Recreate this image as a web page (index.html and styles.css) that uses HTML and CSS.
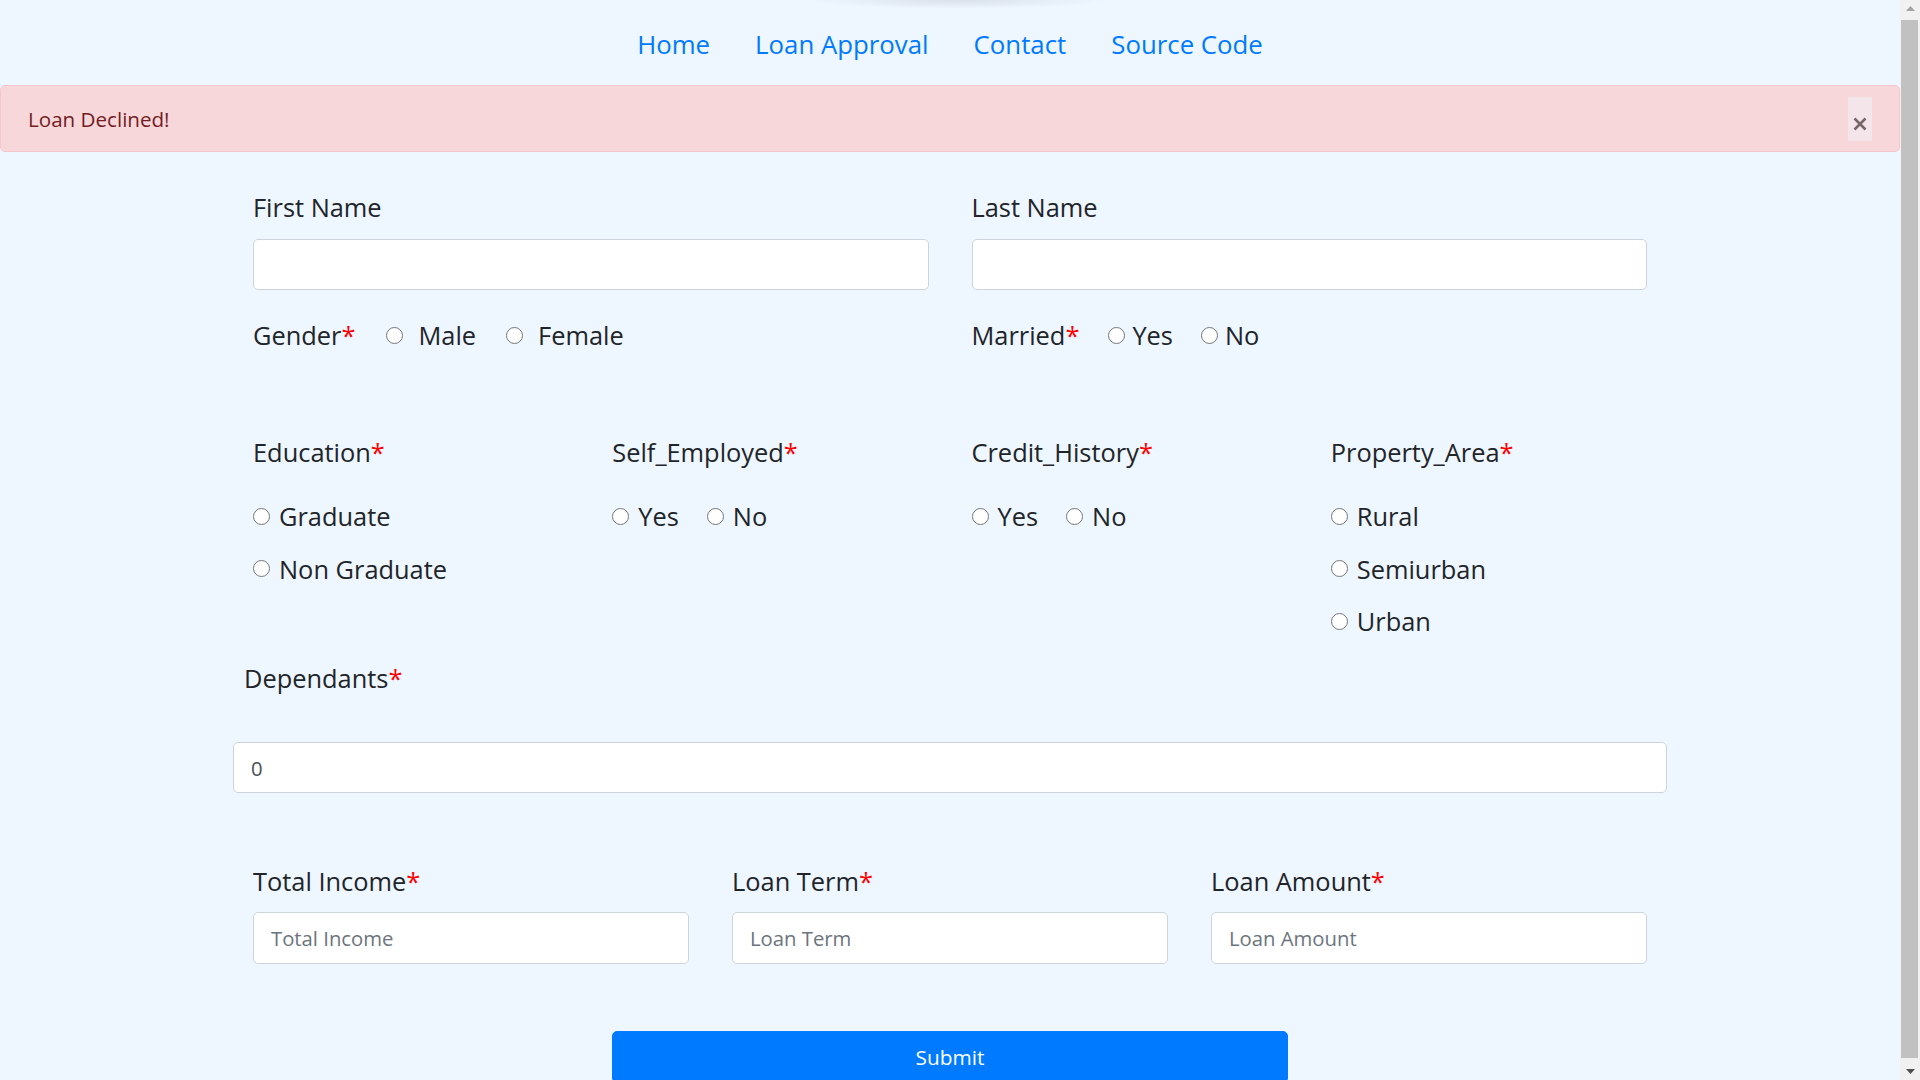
FILE: index.html
```html
<!DOCTYPE html>
<html lang="en">
<head>
<meta charset="utf-8">
<title>Loan Approval</title>
<link rel="stylesheet" href="styles.css">
</head>
<body>
<div class="page">
  <div class="viewport">
    <nav class="topnav">
      <ul>
        <li><a href="#">Home</a></li>
        <li><a href="#">Loan Approval</a></li>
        <li><a href="#">Contact</a></li>
        <li><a href="#">Source Code</a></li>
      </ul>
    </nav>

    <div class="alert">
      Loan Declined!
      <button class="close" type="button" aria-label="Close">
        <svg class="close-icon" width="14" height="14" viewBox="0 0 14 14"><path d="M1.5 1.5 L12.5 12.5 M12.5 1.5 L1.5 12.5" stroke="#76666a" stroke-width="2.6" fill="none"/></svg>
      </button>
    </div>

    <main class="container">
      <form class="loan-form">
        <div class="grid-2 names">
          <div class="field">
            <label class="field-label">First Name</label>
            <input class="input" type="text">
          </div>
          <div class="field">
            <label class="field-label">Last Name</label>
            <input class="input" type="text">
          </div>
        </div>

        <div class="grid-2 inline-row">
          <div class="radio-line">
            <span class="field-label">Gender<span class="req">*</span></span>
            <label class="opt wide first"><input type="radio" name="gender"><span>Male</span></label>
            <label class="opt wide"><input type="radio" name="gender"><span>Female</span></label>
          </div>
          <div class="radio-line married">
            <span class="field-label">Married<span class="req">*</span></span>
            <label class="opt first"><input type="radio" name="married"><span>Yes</span></label>
            <label class="opt"><input type="radio" name="married"><span>No</span></label>
          </div>
        </div>

        <div class="grid-4 groups">
          <div class="group">
            <span class="field-label">Education<span class="req">*</span></span>
            <div class="opt-row"><label class="opt"><input type="radio" name="edu"><span>Graduate</span></label></div>
            <div class="opt-row"><label class="opt"><input type="radio" name="edu"><span>Non Graduate</span></label></div>
          </div>
          <div class="group">
            <span class="field-label">Self_Employed<span class="req">*</span></span>
            <div class="opt-row">
              <label class="opt"><input type="radio" name="self"><span>Yes</span></label>
              <label class="opt next"><input type="radio" name="self"><span>No</span></label>
            </div>
          </div>
          <div class="group">
            <span class="field-label">Credit_History<span class="req">*</span></span>
            <div class="opt-row">
              <label class="opt"><input type="radio" name="credit"><span>Yes</span></label>
              <label class="opt next"><input type="radio" name="credit"><span>No</span></label>
            </div>
          </div>
          <div class="group">
            <span class="field-label">Property_Area<span class="req">*</span></span>
            <div class="opt-row"><label class="opt"><input type="radio" name="area"><span>Rural</span></label></div>
            <div class="opt-row"><label class="opt"><input type="radio" name="area"><span>Semiurban</span></label></div>
            <div class="opt-row"><label class="opt"><input type="radio" name="area"><span>Urban</span></label></div>
          </div>
        </div>

        <div class="dependants">
          <label class="field-label dep-label">Dependants<span class="req">*</span></label>
          <input class="input dep-input" type="text" value="0">
        </div>

        <div class="grid-3 amounts">
          <div class="field">
            <label class="field-label">Total Income<span class="req">*</span></label>
            <input class="input small-gap" type="text" placeholder="Total Income">
          </div>
          <div class="field">
            <label class="field-label">Loan Term<span class="req">*</span></label>
            <input class="input small-gap" type="text" placeholder="Loan Term">
          </div>
          <div class="field">
            <label class="field-label">Loan Amount<span class="req">*</span></label>
            <input class="input small-gap" type="text" placeholder="Loan Amount">
          </div>
        </div>

        <div class="submit-wrap">
          <button class="submit" type="button">Submit</button>
        </div>
      </form>
    </main>
  </div>

  <aside class="scrollbar" aria-hidden="true">
    <div class="sb-btn"><svg width="9" height="5" viewBox="0 0 9 5"><path d="M0 5 L4.5 0 L9 5 Z" fill="#a3a3a3"/></svg></div>
    <div class="sb-thumb"></div>
    <div class="sb-btn"><svg width="9" height="5" viewBox="0 0 9 5"><path d="M0 0 L9 0 L4.5 5 Z" fill="#505050"/></svg></div>
  </aside>
</div>
</body>
</html>
```
FILE: styles.css
```css
* {
  box-sizing: border-box;
}

html,
body {
  margin: 0;
  height: 100%;
}

body {
  font-family: "Open Sans", "Noto Sans", "DejaVu Sans", sans-serif;
  font-size: 20.4px;
  color: #212529;
  background: #eef6ff;
  overflow: hidden;
}

.page {
  display: flex;
  height: 1080px;
}

.viewport {
  flex: 1;
  min-width: 0;
  overflow: hidden;
}

/* ---------- top navigation ---------- */
.topnav {
  height: 85px;
  padding-top: 24px;
  background: radial-gradient(ellipse 150px 9px at 959px 0, rgba(0, 0, 0, 0.09), rgba(0, 0, 0, 0));
}

.topnav ul {
  list-style: none;
  margin: 0;
  padding: 0;
  display: flex;
  justify-content: center;
}

.topnav a {
  display: block;
  padding: 0 22.5px;
  line-height: 40px;
  font-size: 25.8px;
  color: #007bff;
  text-decoration: none;
}

/* ---------- alert ---------- */
.alert {
  position: relative;
  height: 67px;
  padding: 18px 25px 17px 27px;
  border: 1px solid #f5c6cb;
  border-radius: 5px;
  background: #f8d7da;
  color: #721c24;
  font-size: 20.6px;
  line-height: 30px;
}

.close {
  position: absolute;
  top: 11px;
  right: 27px;
  width: 24px;
  height: 44px;
  padding: 0;
  border: 0;
  background: #f4e5ea;
  display: flex;
  align-items: center;
  justify-content: center;
}

.close-icon {
  display: block;
  margin-top: 9px;
}

/* ---------- form ---------- */
.container {
  width: 1434px;
  margin: 0 auto;
  padding: 0 20px;
}

.field-label {
  display: block;
  font-size: 25.4px;
  line-height: 36px;
  white-space: nowrap;
}

.req {
  color: #ff0000;
}

.input {
  display: block;
  width: 100%;
  height: 51px;
  margin: 14px 0 0;
  padding: 0 17px;
  border: 1px solid #ced4da;
  border-radius: 5px;
  background: #fff;
  font-family: inherit;
  font-size: 20.3px;
  color: #495057;
  outline: none;
}

.input::placeholder {
  color: #6c757d;
}

.grid-2 {
  display: grid;
  grid-template-columns: 1fr 1fr;
  column-gap: 43px;
}

.grid-3 {
  display: grid;
  grid-template-columns: repeat(3, 1fr);
  column-gap: 43px;
}

.grid-4 {
  display: grid;
  grid-template-columns: repeat(4, 1fr);
  column-gap: 43px;
  align-items: start;
}

.names {
  margin-top: 37px;
}

.inline-row {
  margin-top: 27px;
}

.radio-line {
  display: flex;
  align-items: center;
  height: 36px;
}

.opt {
  display: inline-flex;
  align-items: center;
  font-size: 25.4px;
  line-height: 36px;
  white-space: nowrap;
}

.opt input {
  -webkit-appearance: none;
  appearance: none;
  flex: none;
  width: 17px;
  height: 17px;
  margin: 0 9px 0 0;
  border: 1px solid #767676;
  border-radius: 50%;
  background: #fff;
}

.radio-line .opt.first {
  margin-left: 31px;
}

.radio-line .opt + .opt {
  margin-left: 30px;
}

.radio-line .opt.wide input {
  margin-right: 15px;
}

.radio-line.married .opt.first {
  margin-left: 29px;
}

.radio-line.married .opt + .opt {
  margin-left: 28px;
}

.radio-line.married .opt input {
  margin-right: 7px;
}

.groups {
  margin-top: 81px;
}

.opt-row {
  display: flex;
  height: 36px;
  margin-top: 16.5px;
}

.group .field-label + .opt-row {
  margin-top: 28px;
}

.opt-row .opt.next {
  margin-left: 28px;
}

/* dependants */
.dependants {
  margin: 21px -20px 0;
}

.dep-label {
  padding-left: 11px;
}

.dep-input {
  margin-top: 46px;
}

/* amounts */
.amounts {
  margin-top: 70px;
}

.small-gap {
  margin-top: 13px;
  height: 52px;
}

/* submit */
.submit-wrap {
  margin-top: 67px;
  display: flex;
  justify-content: center;
}

.submit {
  width: 676px;
  height: 52px;
  border: 1px solid #007bff;
  border-radius: 5px;
  background: #007bff;
  color: #fff;
  font-family: inherit;
  font-size: 20.8px;
  line-height: 30px;
}

/* ---------- fake window scrollbar ---------- */
.scrollbar {
  width: 20px;
  flex: none;
  background: #f1f1f1;
  display: flex;
  flex-direction: column;
  align-items: center;
}

.sb-btn {
  height: 17px;
  width: 100%;
  flex: none;
  display: flex;
  align-items: center;
  justify-content: center;
}

.sb-thumb {
  flex: 1;
  width: 17px;
  margin: 3px 1px 5px 0;
  background: #c1c1c1;
}
```
